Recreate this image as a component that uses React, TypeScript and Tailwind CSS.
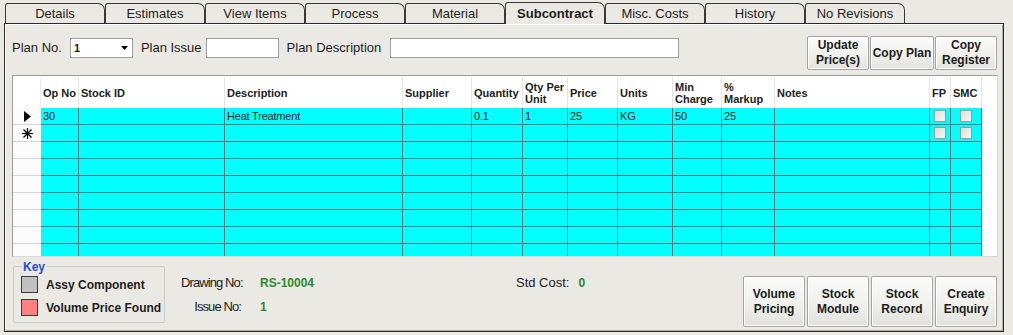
import React from 'react';

const tabs = [
  'Details',
  'Estimates',
  'View Items',
  'Process',
  'Material',
  'Subcontract',
  'Misc. Costs',
  'History',
  'No Revisions',
];

const headers = [
  'Op No',
  'Stock ID',
  'Description',
  'Supplier',
  'Quantity',
  'Qty Per\nUnit',
  'Price',
  'Units',
  'Min\nCharge',
  '%\nMarkup',
  'Notes',
  'FP',
  'SMC',
];

const GRID =
  'grid grid-cols-[28px_38px_146px_178px_69px_51px_45px_50px_55px_49px_53px_155px_21px_31px]';

type Row = { marker: 'current' | 'new' | null; cells: string[]; checks: boolean };

const rows: Row[] = [
  {
    marker: 'current',
    cells: ['30', '', 'Heat Treatment', '', '0.1', '1', '25', 'KG', '50', '25', ''],
    checks: true,
  },
  { marker: 'new', cells: Array(11).fill(''), checks: true },
  ...Array.from({ length: 7 }, () => ({ marker: null, cells: Array(11).fill(''), checks: false })),
];

function WinButton({ children, className = '' }: { children: React.ReactNode; className?: string }) {
  return (
    <button
      type="button"
      className={`flex items-center justify-center rounded-[2px] border border-[#a3a3a3] bg-linear-to-b from-[#fbfbfa] via-[#f1f1ee] to-[#e2e2dd] text-center text-[12px] font-bold leading-[15px] text-[#1c1c1c] shadow-[inset_0_0_0_1px_#ffffff] ${className}`}
    >
      {children}
    </button>
  );
}

function Check() {
  return (
    <div className="h-[12px] w-[12px] border border-[#9a9a9a] bg-linear-to-br from-[#dcdcdc] to-[#f7f7f7]" />
  );
}

function Marker({ kind }: { kind: Row['marker'] }) {
  if (kind === 'current') {
    return (
      <svg width="7" height="11" viewBox="0 0 7 11">
        <polygon points="0,0 7,5.5 0,11" fill="#000" />
      </svg>
    );
  }
  if (kind === 'new') {
    return (
      <svg width="11" height="11" viewBox="0 0 11 11" stroke="#000" strokeWidth="1.2">
        <line x1="5.5" y1="0" x2="5.5" y2="11" />
        <line x1="0" y1="5.5" x2="11" y2="5.5" />
        <line x1="1.5" y1="1.5" x2="9.5" y2="9.5" />
        <line x1="9.5" y1="1.5" x2="1.5" y2="9.5" />
      </svg>
    );
  }
  return null;
}

export default function App() {
  return (
    <div className="h-[335px] w-[1013px] overflow-hidden bg-[#ebe9e3] pt-[2px] font-['Liberation_Sans',Arial,sans-serif] text-[#1c1c1c]">
      {/* tab strip */}
      <div className="ml-[5px] flex h-[21px] items-end">
        {tabs.map((t) => {
          const active = t === 'Subcontract';
          return (
            <div
              key={t}
              className={
                active
                  ? 'relative z-10 -mb-px flex h-[22px] w-[100px] items-center justify-center rounded-tl-[3px] rounded-tr-[7px] border border-b-0 border-[#3a3a3a] bg-[#ebe9e3] pt-px text-[13px] font-bold'
                  : 'flex h-[20px] w-[100px] items-center justify-center rounded-tl-[3px] rounded-tr-[7px] border border-b-0 border-[#3a3a3a] bg-[#ebe9e3] text-[13px]'
              }
            >
              {t}
            </div>
          );
        })}
      </div>

      {/* panel */}
      <div className="ml-[4px] h-[309px] w-[1000px] border border-[#2a2a2a] shadow-[inset_1px_1px_0_#ffffff,inset_-1px_-1px_0_#a9a9a9]">
        {/* plan row */}
        <div className="mt-[12px] flex h-[34px] items-start">
          <span className="ml-[7px] mt-[2px] text-[13px] leading-[20px]">Plan No.</span>
          <div className="ml-[8px] mt-[2px] flex h-[20px] w-[63px] items-center justify-between border border-[#a0a0a0] bg-white pl-[3px] pr-[4px]">
            <span className="text-[11px] font-bold">1</span>
            <svg width="7" height="4" viewBox="0 0 7 4">
              <polygon points="0,0 7,0 3.5,4" fill="#000" />
            </svg>
          </div>
          <span className="ml-[8px] mt-[2px] text-[13px] leading-[20px]">Plan Issue</span>
          <div className="ml-[4px] mt-[2px] h-[20px] w-[73px] border border-[#a0a0a0] bg-white" />
          <span className="ml-[8px] mt-[2px] text-[13px] leading-[20px]">Plan Description</span>
          <div className="ml-[9px] mt-[2px] h-[20px] w-[289px] border border-[#a0a0a0] bg-white" />
          <div className="flex-1" />
          <div className="mr-[6px] flex gap-[1px]">
            <WinButton className="h-[34px] w-[62px]">
              Update
              <br />
              Price(s)
            </WinButton>
            <WinButton className="h-[34px] w-[64px]">Copy Plan</WinButton>
            <WinButton className="h-[34px] w-[62px]">
              Copy
              <br />
              Register
            </WinButton>
          </div>
        </div>

        {/* data grid */}
        <div className="ml-[7px] mt-[5px] h-[182px] w-[986px] overflow-hidden border border-[#9c9c9c] border-b-[#d8d8d8] border-r-[#d8d8d8] bg-white">
          <div className={`${GRID} h-[32px] border-t border-white`}>
            <div className="border-r border-[#ececec]" />
            {headers.map((h) => (
              <div
                key={h}
                className="flex items-center whitespace-pre-line border-r border-[#e4e4e4] pl-[2px] text-[11px] font-bold leading-[12px] text-[#222]"
              >
                {h}
              </div>
            ))}
          </div>
          {rows.map((r, i) => (
            <div key={i} className={`${GRID} h-[17px]`}>
              <div className="flex items-center justify-center border-b border-[#d6d6d6] bg-[#fcfcfc]">
                <Marker kind={r.marker} />
              </div>
              {r.cells.map((c, j) => (
                <div
                  key={j}
                  className="truncate border-b border-r border-[#607676] bg-[#00ffff] pl-[2px] text-[11px] leading-[16px] tracking-[-0.2px] text-[#1a1a1a]"
                >
                  {c}
                </div>
              ))}
              <div className="flex items-center justify-center border-b border-r border-[#607676] bg-[#00ffff]">
                {r.checks && <Check />}
              </div>
              <div className="flex items-center justify-center border-b border-r border-[#607676] bg-[#00ffff]">
                {r.checks && <Check />}
              </div>
            </div>
          ))}
        </div>

        {/* footer */}
        <div className="flex h-[72px] items-start">
          <div className="relative ml-[8px] mt-[9px] flex h-[57px] w-[152px] flex-col gap-[6px] rounded-[2px] border border-[#cbcbcb] pl-[7px] pt-[9px]">
            <span className="absolute left-[8px] top-[-7px] bg-[#ebe9e3] px-[1px] text-[12px] font-bold leading-[14px] text-[#1f4fd0]">
              Key
            </span>
            <div className="flex items-center gap-[8px]">
              <div className="h-[17px] w-[17px] border border-[#3c3c3c] bg-[#c0c0c0]" />
              <span className="text-[12px] font-bold leading-[14px]">Assy Component</span>
            </div>
            <div className="flex items-center gap-[8px]">
              <div className="h-[17px] w-[17px] border border-[#3c3c3c] bg-[#ff8080]" />
              <span className="text-[12px] font-bold leading-[14px]">Volume Price Found</span>
            </div>
          </div>

          <div className="ml-[16px] mt-[18px] grid w-[335px] grid-cols-[60px_1fr] gap-x-[19px] gap-y-[8px] leading-[16px]">
            <span className="whitespace-nowrap text-right text-[13px] tracking-[-0.9px]">Drawing No:</span>
            <span className="text-[12px] font-bold text-[#2d8a2d]">RS-10004</span>
            <span className="whitespace-nowrap text-right text-[13px] tracking-[-0.9px]">Issue No:</span>
            <span className="text-[12px] font-bold text-[#2d8a2d]">1</span>
          </div>

          <div className="mt-[18px] flex gap-[9px] text-[13px] leading-[16px]">
            <span>Std Cost:</span>
            <span className="text-[12px] font-bold text-[#2d8a2d]">0</span>
          </div>

          <div className="flex-1" />
          <div className="mr-[6px] mt-[19px] flex gap-[2px]">
            <WinButton className="h-[51px] w-[62px]">
              Volume
              <br />
              Pricing
            </WinButton>
            <WinButton className="h-[51px] w-[62px]">
              Stock
              <br />
              Module
            </WinButton>
            <WinButton className="h-[51px] w-[62px]">
              Stock
              <br />
              Record
            </WinButton>
            <WinButton className="h-[51px] w-[62px]">
              Create
              <br />
              Enquiry
            </WinButton>
          </div>
        </div>
      </div>
    </div>
  );
}
